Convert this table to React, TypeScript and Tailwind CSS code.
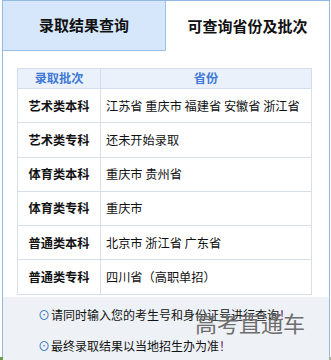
import React from "react";

const rows: { batch: string; provinces: string }[] = [
  { batch: "艺术类本科", provinces: "江苏省 重庆市 福建省 安徽省 浙江省" },
  { batch: "艺术类专科", provinces: "还未开始录取" },
  { batch: "体育类本科", provinces: "重庆市 贵州省" },
  { batch: "体育类专科", provinces: "重庆市" },
  { batch: "普通类本科", provinces: "北京市 浙江省 广东省" },
  { batch: "普通类专科", provinces: "四川省（高职单招）" },
];

const font = { fontFamily: '"Noto Sans CJK SC", "Noto Sans", sans-serif' };

export default function App() {
  return (
    <div className="relative w-[331px] h-[360px] bg-white overflow-hidden" style={font}>
      <div className="ml-[2px] w-[328px] h-[357px] border border-[#94b8e4] bg-white flex flex-col">
        <div className="flex h-[50px] shrink-0">
          <div className="w-[163px] bg-[#d6e7fc] border-r border-b border-[#9fc0e8] flex items-center justify-center text-[15px] font-bold text-[#111]">
            录取结果查询
          </div>
          <div className="flex-1 flex items-center justify-center text-[15px] font-bold text-[#111]">
            可查询省份及批次
          </div>
        </div>

        <div className="pl-[14px] pt-[17px] pb-[2px]">
          <table className="w-[295px] border-collapse text-[12.2px]">
            <thead>
              <tr className="h-[20px] bg-[#eaf1fb]">
                <th className="w-[83px] border border-[#d3deec] text-[#3f78d6] font-bold leading-none">录取批次</th>
                <th className="border border-[#d3deec] text-[#3f78d6] font-bold leading-none">省份</th>
              </tr>
            </thead>
            <tbody>
              {rows.map((r) => (
                <tr key={r.batch} className="h-[34.3px]">
                  <td className="border border-[#d8dfe9] text-center font-bold text-[#111]">{r.batch}</td>
                  <td className="border border-[#d8dfe9] pl-[5px] text-[#111] whitespace-nowrap">{r.provinces}</td>
                </tr>
              ))}
            </tbody>
          </table>
        </div>

        <div className="flex-1 bg-[#eef2f6] pl-[35px] pt-[3px] text-[12px] text-[#111]">
          <div className="h-[31px] flex items-center">
            <span className="text-[#2d6fb8] mr-[1px]">⊙</span>请同时输入您的考生号和身份证号进行查询<span className="text-[#6a1570]">！</span>
          </div>
          <div className="h-[31px] flex items-center">
            <span className="text-[#2d6fb8] mr-[1px]">⊙</span>最终录取结果以当地招生办为准<span className="text-[#6a1570]">！</span>
          </div>
        </div>
      </div>
      <div className="h-[3px] bg-gradient-to-r from-[#6f9a4a] via-[#b9c8b0] to-[#9fb49a]" />

      <div className="absolute left-[195px] top-[311px] text-[22px] leading-none text-[#6e6e6e] pointer-events-none">
        高考直通车
      </div>
    </div>
  );
}
